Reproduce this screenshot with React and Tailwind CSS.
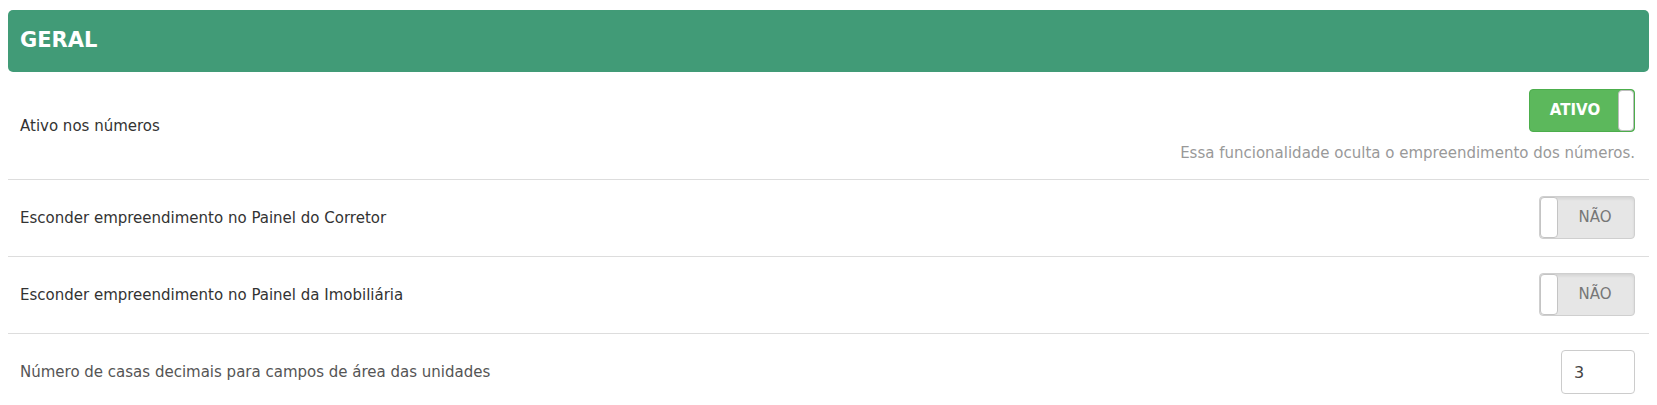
import React, { useState } from 'react';

// Toggle like the bootstrap-toggle used in the settings page
const Toggle = ({ on, onLabel = 'ATIVO', offLabel = 'NÃO', onClick }) => {
    if (on) {
        return (
            <button
                type="button"
                onClick={onClick}
                className="flex h-[43px] w-[106px] items-stretch overflow-hidden rounded-[4px] border border-[#4cae4c] bg-[#5cb85c]"
            >
                <span className="flex flex-1 items-center justify-center pl-[2px] text-[15px] font-bold text-white">
                    {onLabel}
                </span>
                <span className="w-[16px] rounded-[4px] border border-[#bdbdbd] bg-white" />
            </button>
        );
    }
    return (
        <button
            type="button"
            onClick={onClick}
            className="flex h-[43px] w-[96px] items-stretch overflow-hidden rounded-[4px] border border-[#cfcfcf] bg-[#e6e6e6] shadow-[inset_0_2px_3px_rgba(0,0,0,0.08)]"
        >
            <span className="w-[18px] rounded-[4px] border border-[#c4c4c4] bg-white" />
            <span className="flex flex-1 items-center justify-center pr-[2px] text-[15px] text-[#777]">
                {offLabel}
            </span>
        </button>
    );
};

const Row = ({ label, muted, children, last }) => (
    <div className={`flex items-start justify-between pt-4 pb-[17px] pl-3 pr-[14px] ${last ? '' : 'border-b border-[#dddddd]'}`}>
        <div className={`flex h-[43px] items-center pt-[2px] text-[15px] ${muted ? 'text-[#555]' : 'text-[#333]'}`}>
            {label}
        </div>
        <div className="flex flex-col items-end">{children}</div>
    </div>
);

export default function App() {
    const [ativo, setAtivo] = useState(true);
    const [corretor, setCorretor] = useState(false);
    const [imob, setImob] = useState(false);
    const [casas, setCasas] = useState('3');

    return (
        <div className="min-h-[405px] bg-white px-2 pt-[10px] [font-family:'DejaVu_Sans',sans-serif]">
            {/* Header */}
            <div className="flex h-[62px] items-center rounded-[5px] bg-[#419b77] px-3">
                <h2 className="text-[21px] font-bold text-white">GERAL</h2>
            </div>

            {/* Ativo nos números */}
            <div className="flex items-start justify-between border-b border-[#dddddd] pt-[17px] pb-[17px] pl-3 pr-[14px]">
                <div className="flex h-[71px] items-center pt-[3px] text-[15px] text-[#333]">Ativo nos números</div>
                <div className="flex flex-col items-end">
                    <Toggle on={ativo} onClick={() => setAtivo(!ativo)} />
                    <p className="mt-[12px] text-[15px] leading-[18px] text-[#999]">
                        Essa funcionalidade oculta o empreendimento dos números.
                    </p>
                </div>
            </div>

            <Row label="Esconder empreendimento no Painel do Corretor">
                <Toggle on={corretor} onClick={() => setCorretor(!corretor)} />
            </Row>

            <Row label="Esconder empreendimento no Painel da Imobiliária">
                <Toggle on={imob} onClick={() => setImob(!imob)} />
            </Row>

            <Row label="Número de casas decimais para campos de área das unidades" muted last>
                <input
                    type="text"
                    value={casas}
                    onChange={(e) => setCasas(e.target.value)}
                    className="h-[44px] w-[74px] rounded-[4px] border border-[#cccccc] px-3 text-[16px] text-[#444] outline-none"
                />
            </Row>
        </div>
    );
}
